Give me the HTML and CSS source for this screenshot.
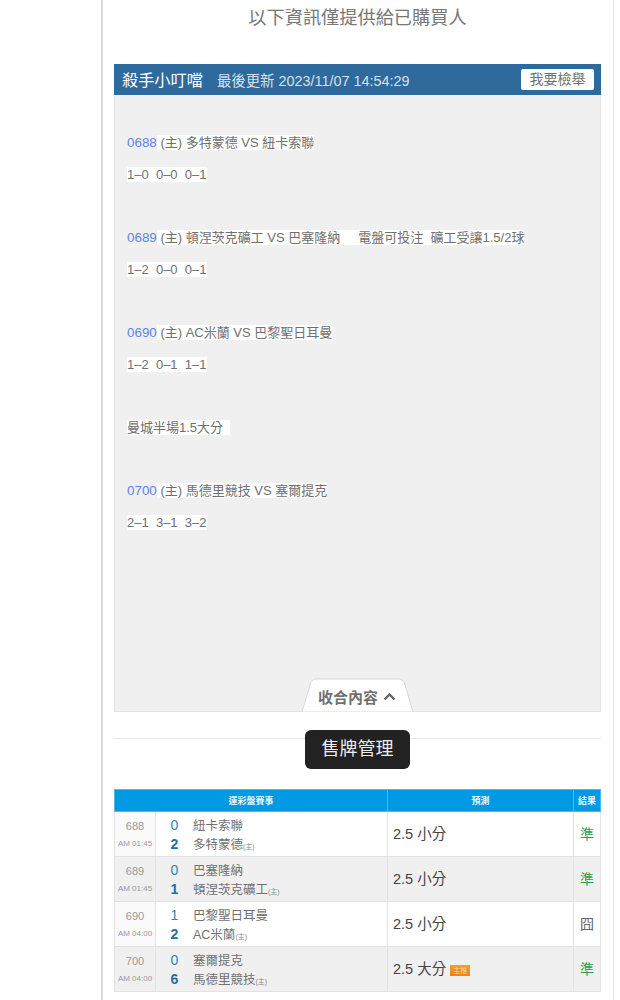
FILE: index.html
```html
<!DOCTYPE html>
<html lang="zh-Hant">
<head>
  <meta charset="UTF-8" />
  <title>以下資訊僅提供給已購買人</title>
  <link rel="stylesheet" href="styles.css">
</head>
<body>
  <div class="wrap">
    <h2 class="notice">以下資訊僅提供給已購買人</h2>

    <div class="panel">
      <div class="panel-head">
        <span class="author">殺手小叮噹</span>
        <span class="updated">最後更新 2023/11/07 14:54:29</span>
        <span class="report">我要檢舉</span>
      </div>
      <div class="panel-body">
        <p><span class="num">0688</span><span class="hl"> (主) 多特蒙德 VS 紐卡索聯</span></p>
        <p><span class="hl">1–0&nbsp; 0–0&nbsp; 0–1</span></p>
        <p>&nbsp;</p>
        <p><span class="num">0689</span><span class="hl"> (主) 頓涅茨克礦工 VS 巴塞隆納 &nbsp; &nbsp; 電盤可投注&nbsp; 礦工受讓1.5/2球</span></p>
        <p><span class="hl">1–2&nbsp; 0–0&nbsp; 0–1</span></p>
        <p>&nbsp;</p>
        <p><span class="num">0690</span><span class="hl"> (主) AC米蘭 VS 巴黎聖日耳曼</span></p>
        <p><span class="hl">1–2&nbsp; 0–1&nbsp; 1–1</span></p>
        <p>&nbsp;</p>
        <p><span class="hl">曼城半場1.5大分&nbsp;&nbsp;</span></p>
        <p>&nbsp;</p>
        <p><span class="num">0700</span><span class="hl"> (主) 馬德里競技 VS 塞爾提克</span></p>
        <p><span class="hl">2–1&nbsp; 3–1&nbsp; 3–2</span></p>

        <div class="collapse-tab">
          <svg class="tab-shape" width="113" height="34" viewBox="0 0 113 34">
            <path d="M1 34 L9 7 C10 3 12 1 16 1 L97 1 C101 1 103 3 104 7 L112 34 Z" fill="#fff" stroke="#d8d8d8" />
          </svg>
          <span class="tab-label">收合內容</span>
          <svg class="tab-arrow" width="13" height="9" viewBox="0 0 13 9">
            <path d="M1.5 7.5 L6.5 2.5 L11.5 7.5" fill="none" stroke="#666" stroke-width="2.4" />
          </svg>
        </div>
      </div>
    </div>

    <div class="section-title">
      <span class="pill">售牌管理</span>
    </div>

    <table class="records">
      <colgroup>
        <col class="c-id">
        <col class="c-match">
        <col class="c-pick">
        <col class="c-res">
      </colgroup>
      <thead>
        <tr>
          <th colspan="2">運彩盤賽事</th>
          <th>預測</th>
          <th>結果</th>
        </tr>
      </thead>
      <tbody>
        <tr>
          <td class="col-id">688<small>AM 01:45</small></td>
          <td class="col-match">
            <div class="team"><b>0</b>紐卡索聯</div>
            <div class="team win"><b>2</b>多特蒙德<i>(主)</i></div>
          </td>
          <td class="col-pick">2.5 小分</td>
          <td class="col-res ok">準</td>
        </tr>
        <tr class="alt">
          <td class="col-id">689<small>AM 01:45</small></td>
          <td class="col-match">
            <div class="team"><b>0</b>巴塞隆納</div>
            <div class="team win"><b>1</b>頓涅茨克礦工<i>(主)</i></div>
          </td>
          <td class="col-pick">2.5 小分</td>
          <td class="col-res ok">準</td>
        </tr>
        <tr>
          <td class="col-id">690<small>AM 04:00</small></td>
          <td class="col-match">
            <div class="team"><b>1</b>巴黎聖日耳曼</div>
            <div class="team win"><b>2</b>AC米蘭<i>(主)</i></div>
          </td>
          <td class="col-pick">2.5 小分</td>
          <td class="col-res">囧</td>
        </tr>
        <tr class="alt">
          <td class="col-id">700<small>AM 04:00</small></td>
          <td class="col-match">
            <div class="team"><b>0</b>塞爾提克</div>
            <div class="team win"><b>6</b>馬德里競技<i>(主)</i></div>
          </td>
          <td class="col-pick">2.5 大分 <span class="badge">主推</span></td>
          <td class="col-res ok">準</td>
        </tr>
      </tbody>
    </table>
  </div>
</body>
</html>
```

FILE: styles.css
```css
body {
  margin: 0;
  font-family: "Liberation Sans", "Noto Sans CJK TC", sans-serif;
  background: #fff;
  color: #707070;
}

.wrap {
  box-sizing: border-box;
  width: 513px;
  height: 1000px;
  margin-left: 101px;
  padding: 0 12px 0 11px;
  border-left: 2px solid #d8d8d8;
  border-right: 1px solid #e4e4e4;
  overflow: hidden;
}

.notice {
  margin: 0;
  height: 64px;
  padding-top: 5px;
  box-sizing: border-box;
  font-size: 18.2px;
  font-weight: normal;
  line-height: 27px;
  text-align: center;
  color: #777;
}

.panel {
  width: 487px;
}

.panel-head {
  display: flex;
  align-items: center;
  height: 31px;
  padding: 0 7px 1px 8px;
  box-sizing: border-box;
  background: #2f6a9e;
  color: #fff;
}

.author {
  font-size: 16.2px;
}

.updated {
  margin-left: 14px;
  font-size: 14.4px;
  color: #d5e0ea;
}

.report {
  margin-left: auto;
  width: 73px;
  height: 21px;
  border-radius: 2px;
  background: #fff;
  color: #707070;
  font-size: 14px;
  line-height: 21px;
  text-align: center;
}

.panel-body {
  position: relative;
  box-sizing: border-box;
  height: 617px;
  padding: 32.2px 12px 0;
  background: #f0f0f0;
  border: 1px solid #e2e2e2;
  border-top: none;
}

.panel-body p {
  margin: 0;
  height: 31.65px;
  font-size: 13px;
  line-height: 31.65px;
  white-space: nowrap;
}

.num {
  color: #5b84f0;
  font-size: 13.4px;
}

.hl {
  background: #fff;
}

.collapse-tab {
  position: absolute;
  left: 186px;
  bottom: -1px;
  width: 113px;
  height: 34px;
  display: flex;
  align-items: center;
  padding: 2px 0 0 17px;
  box-sizing: border-box;
}

.tab-shape {
  position: absolute;
  left: 0;
  top: 0;
}

.tab-label {
  position: relative;
  font-size: 15px;
  font-weight: bold;
  color: #707070;
}

.tab-arrow {
  position: relative;
  margin-left: 5px;
}

.section-title {
  margin-top: 26px;
  height: 50px;
  border-top: 1px solid #e8e8e8;
  text-align: center;
}

.pill {
  display: inline-block;
  width: 105px;
  height: 39px;
  margin-top: -9px;
  border-radius: 6px;
  background: #222;
  color: #eee;
  font-size: 18px;
  line-height: 39px;
}

.records {
  width: 486px;
  table-layout: fixed;
  border-collapse: collapse;
}

.c-id {
  width: 41px;
}

.c-match {
  width: 232px;
}

.c-pick {
  width: 186px;
}

.c-res {
  width: 27px;
}

.records th {
  height: 21px;
  padding: 0;
  background: #0099e3;
  border: 1px solid #4db8ee;
  color: #e6f5fc;
  font-size: 9px;
  font-weight: bold;
  text-align: center;
}

.records td {
  box-sizing: border-box;
  height: 45px;
  padding: 0;
  border: 1px solid #e2e2e2;
}

.col-id {
  text-align: center;
  font-size: 11px;
  line-height: 14px;
  color: #999;
  background: #fafafa;
}

.alt td {
  background: #f0f0f0;
}

.col-id small {
  display: block;
  margin-top: 6px;
  font-size: 8px;
  line-height: 10px;
}

.records .col-match {
  padding-top: 4px;
}

.team {
  display: flex;
  align-items: baseline;
  font-size: 12.5px;
  line-height: 18px;
  color: #707070;
}

.team b {
  width: 37px;
  text-align: center;
  font-size: 14px;
  font-weight: normal;
  color: #2f86b8;
}

.team.win b {
  font-weight: bold;
  color: #1f6fa3;
}

.team i {
  font-size: 7px;
  font-style: normal;
  color: #888;
}

.records .col-pick {
  padding-left: 5px;
  padding-bottom: 3px;
  font-size: 14.5px;
  color: #444;
}

.records .col-res {
  padding-bottom: 2px;
  text-align: center;
  font-size: 14px;
  color: #666;
}

.records .col-res.ok {
  color: #2e9e4f;
}

.badge {
  display: inline-block;
  width: 20px;
  height: 11px;
  background: linear-gradient(#f0a030, #f08020);
  color: #f8d8a0;
  font-size: 7px;
  line-height: 11px;
  text-align: center;
  vertical-align: 1px;
}
```
